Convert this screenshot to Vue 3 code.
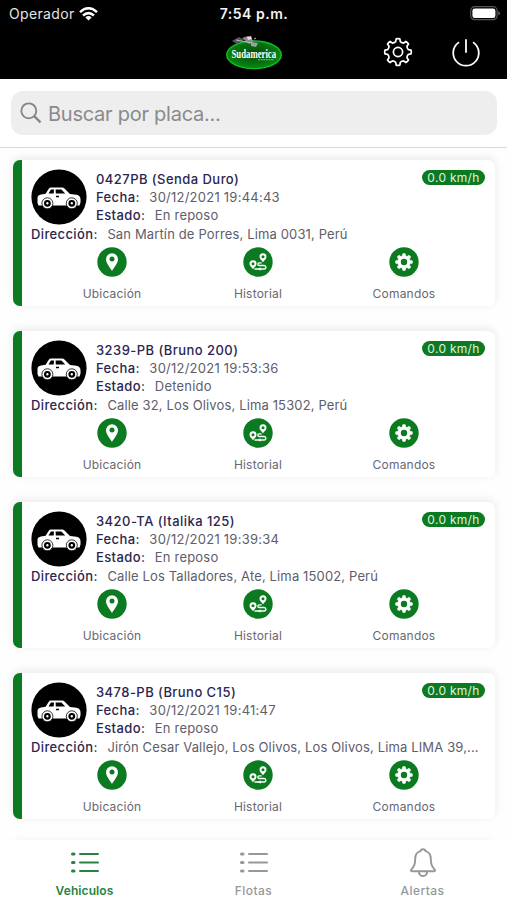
<script setup>
const vehicles = [
  { name: '0427PB (Senda Duro)', date: '30/12/2021 19:44:43', state: 'En reposo', address: 'San Martín de Porres, Lima 0031, Perú' },
  { name: '3239-PB (Bruno 200)', date: '30/12/2021 19:53:36', state: 'Detenido', address: 'Calle 32, Los Olivos, Lima 15302, Perú' },
  { name: '3420-TA (Italika 125)', date: '30/12/2021 19:39:34', state: 'En reposo', address: 'Calle Los Talladores, Ate, Lima 15002, Perú' },
  { name: '3478-PB (Bruno C15)', date: '30/12/2021 19:41:47', state: 'En reposo', address: 'Jirón Cesar Vallejo, Los Olivos, Los Olivos, Lima LIMA 39,...' },
]

// Outline of an eight-toothed cog centred on the origin
function cog(outer, inner, tip, root) {
  const at = (r, deg) => {
    const a = ((deg - 90) * Math.PI) / 180
    return `${(r * Math.cos(a)).toFixed(2)} ${(r * Math.sin(a)).toFixed(2)}`
  }
  let d = ''
  for (let i = 0; i < 8; i++) {
    const c = i * 45
    d += `${i ? 'L' : 'M'}${at(inner, c - root)}L${at(outer, c - tip)}Q${at(outer + 0.4, c)} ${at(outer, c + tip)}L${at(inner, c + root)}Q${at(inner - 0.9, c + 22.5)} ${at(inner, c + 45 - root)}`
  }
  return d + 'Z'
}
const outlineCog = cog(13.2, 10.6, 8, 12.5)
const solidCog = cog(8.3, 6.7, 9, 14)
</script>

<template>
  <div class="screen">
    <header class="top">
      <div class="status">
        <div class="carrier">
          <span>Operador</span>
          <svg width="19" height="14" viewBox="0 0 19 14" fill="none" stroke="#fff" stroke-width="2.5">
            <path d="M1 5.1Q9.5-2.5 18 5.1" /><path d="M4 8.5Q9.5 3.7 15 8.5" />
            <path d="M9.5 13.5L6.4 10.4Q9.5 7.8 12.6 10.4Z" fill="#fff" stroke="none" />
          </svg>
        </div>
        <b class="clock">7:54 p.m.</b>
        <svg class="battery" width="31" height="15" viewBox="0 0 31 15">
          <rect x=".7" y=".7" width="26.4" height="13" rx="4" fill="none" stroke="#57575a" stroke-width="1.2" />
          <rect x="2.4" y="2.4" width="23" height="9.6" rx="2.3" fill="#fff" />
          <path d="M28.3 5.2Q30 5.7 30 7.2Q30 8.7 28.3 9.2Z" fill="#66666a" />
        </svg>
      </div>
      <div class="brandbar">
        <svg class="logo" width="60" height="36" viewBox="0 0 60 36">
          <defs>
            <radialGradient id="leaf" cx=".5" cy=".45" r=".55">
              <stop offset="0" stop-color="#064a0b" /><stop offset=".7" stop-color="#077410" /><stop offset="1" stop-color="#069013" />
            </radialGradient>
          </defs>
          <ellipse cx="30" cy="19.8" rx="27.3" ry="13.8" fill="url(#leaf)" stroke="#12bd24" stroke-width="1.4" />
          <path d="M8 6L15 2L20 5L13 9Z" fill="#55565d" />
          <path d="M18 3L24 1L30 6L25 9Z" fill="#8b8a91" />
          <path d="M23 2L27 1L28 4L24 5Z" fill="#e3ded9" />
          <path d="M27 7L34 8L32 12L27 11Z" fill="#98a19b" />
          <path d="M30 4L32 3M12 5L28 8" stroke="#bcb9c3" stroke-width="1" />
          <text transform="translate(29.8 22.8) scale(.76 1)" text-anchor="middle" class="logotext">Sudamerica</text>
          <path d="M34 24.8H50" stroke="#8cb58e" stroke-width="1.1" stroke-dasharray="2 .6" />
        </svg>
        <svg class="gear" width="30" height="30" viewBox="-15 -15 30 30" fill="none" stroke="#fff" stroke-width="1.7" stroke-linejoin="round">
          <path :d="outlineCog" /><circle r="4.6" />
        </svg>
        <svg class="power" width="30" height="30" viewBox="-15 -15 30 30" fill="none" stroke="#fff" stroke-width="1.8" stroke-linecap="round">
          <path d="M-7.6-10.4A12.8 12.8 0 1 0 7.6-10.4M0-13V-1" />
        </svg>
      </div>
    </header>

    <div class="searchrow">
      <div class="search">
        <svg width="22" height="22" viewBox="0 0 22 22" fill="none" stroke="#858588" stroke-width="1.8">
          <circle cx="8.8" cy="8.8" r="7.5" /><path d="M14.2 14.2L20.5 20.3" stroke-width="2.3" />
        </svg>
        <span>Buscar por placa...</span>
      </div>
    </div>

    <main class="list">
      <article v-for="v in vehicles" :key="v.name" class="card">
        <div class="summary">
          <svg class="avatar" width="56" height="56" viewBox="0 0 56 56">
            <circle cx="28" cy="28" r="27.6" fill="#000" />
            <path d="M6.5 34V28.5Q6.8 26 10 25.4L14.6 24.8L17.8 19.7Q18.5 18.6 20 18.6H31Q32.6 18.6 34 20L39 25L45.5 25.8Q49.3 26.5 49.5 30V33.5L48.5 36.5H7.5Z" fill="#fff" />
            <path d="M17.5 24.4L19.9 20.6H23L22.7 24.4ZM24.6 20.6H30.4L34.2 24.4H24.8Z" fill="#000" />
            <path d="M25 27.5H28" stroke="#000" stroke-width="1.5" />
            <g fill="#fff" stroke="#000" stroke-width=".8">
              <circle cx="16.4" cy="34.3" r="5.5" /><circle cx="40.8" cy="34.3" r="5.5" />
            </g>
            <g fill="#fff" stroke="#000" stroke-width="2.2">
              <circle cx="16.4" cy="34.3" r="2.3" /><circle cx="40.8" cy="34.3" r="2.3" />
            </g>
          </svg>
          <div class="facts">
            <div class="line name">{{ v.name }}</div>
            <div class="line"><b>Fecha:</b><span class="date">{{ v.date }}</span></div>
            <div class="line"><b>Estado:</b><span>{{ v.state }}</span></div>
          </div>
          <span class="speed">0.0 km/h</span>
        </div>
        <div class="line address"><b>Dirección:</b><span>{{ v.address }}</span></div>
        <div class="actions">
          <div class="action">
            <svg width="30" height="30" viewBox="0 0 30 30">
              <circle cx="15" cy="15" r="14.7" fill="#0c7a20" />
              <path fill-rule="evenodd" d="M15 23.9C13 20.4 9 16.2 9 12.2A6 6 0 0 1 21 12.2C21 16.2 17 20.4 15 23.9ZM15 9.4A2.5 2.5 0 1 0 15 14.4A2.5 2.5 0 1 0 15 9.4Z" fill="#fff" />
            </svg>
            <span>Ubicación</span>
          </div>
          <div class="action">
            <svg width="30" height="30" viewBox="0 0 30 30">
              <circle cx="15" cy="15" r="14.7" fill="#0c7a20" />
              <path fill="#fff" fill-rule="evenodd" d="M20 15.2C18.5 13.2 16.5 11.6 16.5 9.7A3.5 3.5 0 0 1 23.5 9.7C23.5 11.6 21.5 13.2 20 15.2ZM20 8.2A1.5 1.5 0 1 0 20 11.2A1.5 1.5 0 1 0 20 8.2Z" />
              <path fill="#fff" fill-rule="evenodd" d="M10 22.2C8.5 20.2 6.5 18.6 6.5 16.7A3.5 3.5 0 0 1 13.5 16.7C13.5 18.6 11.5 20.2 10 22.2ZM10 15.2A1.5 1.5 0 1 0 10 18.2A1.5 1.5 0 1 0 10 15.2Z" />
              <path d="M18.6 15.9H16.3Q14.8 16 14.8 17.2Q14.8 18.4 16.5 18.5H21Q22.9 18.6 22.9 20.2Q22.9 22 21 22H11.5" fill="none" stroke="#fff" stroke-width="1.3" />
              <path d="M17.5 20.3L15 22L17.5 23.7Z" fill="#fff" />
            </svg>
            <span>Historial</span>
          </div>
          <div class="action">
            <svg width="30" height="30" viewBox="-15 -15 30 30">
              <circle r="14.7" fill="#0c7a20" />
              <path :d="solidCog" fill="#fff" stroke="#fff" stroke-width=".6" stroke-linejoin="round" /><circle r="3.2" fill="#0c7a20" />
            </svg>
            <span>Comandos</span>
          </div>
        </div>
      </article>
      <div class="card next"></div>
    </main>

    <nav class="tabs">
      <div class="tab active">
        <svg width="30" height="28" viewBox="0 0 30 28" fill="none" stroke="currentColor" stroke-width="2" stroke-linecap="round">
          <path d="M10 5H28M10 13.5H28M10 22H28" />
          <path d="M2.5 5H4M2.5 13.5H4M2.5 22H4" stroke-width="3" />
        </svg>
        <span>Vehiculos</span>
      </div>
      <div class="tab">
        <svg width="30" height="28" viewBox="0 0 30 28" fill="none" stroke="currentColor" stroke-width="2" stroke-linecap="round">
          <path d="M10 5H28M10 13.5H28M10 22H28" />
          <path d="M2.5 5H4M2.5 13.5H4M2.5 22H4" stroke-width="3" />
        </svg>
        <span>Flotas</span>
      </div>
      <div class="tab">
        <svg width="30" height="30" viewBox="0 0 30 30" fill="none" stroke="currentColor" stroke-width="1.9" stroke-linejoin="round">
          <path d="M15 1.2C13.2 1.2 12.6 2.3 12.4 3.2C8.6 4.2 7.2 7.3 7.2 11C7.2 17 5.8 18.7 3.3 21.6Q2.4 23 3.8 23.2H26.2Q27.6 23 26.7 21.6C24.2 18.7 22.8 17 22.8 11C22.8 7.3 21.4 4.2 17.6 3.2C17.4 2.3 16.8 1.2 15 1.2Z" />
          <path d="M10.8 23.5C11 26.6 12.6 28 15 28S19 26.6 19.2 23.5" />
        </svg>
        <span>Alertas</span>
      </div>
    </nav>
  </div>
</template>

<style>
body { margin: 0; background: #fff; }
</style>

<style scoped>
.screen { width: 507px; height: 900px; display: flex; flex-direction: column; overflow: hidden; background: #fefefe; font-family: Inter, "Liberation Sans", sans-serif; }
svg { display: block; flex: none; }
.top { height: 79px; flex: none; background: #000; color: #fff; }
.status { height: 27px; display: grid; grid-template-columns: 1fr auto 1fr; align-items: center; padding: 0 6px 0 9px; box-sizing: border-box; }
.carrier { display: flex; align-items: center; gap: 4.5px; font-size: 14px; color: #e4e4e4; letter-spacing: .35px; }
.clock { font-size: 14px; font-weight: 600; letter-spacing: .5px; color: #f3f3f3; margin-right: 2px; }
.battery { justify-self: end; }
.brandbar { height: 52px; display: grid; grid-template-columns: 224px 60px 98px 69px 56px; align-items: start; }
.logo { grid-column: 2; margin-top: 8px; overflow: visible; }
.logotext { font: bold 11.5px "Liberation Serif", serif; fill: #fff; }
.gear { grid-column: 4; margin-top: 10px; margin-left: .7px; }
.power { grid-column: 5; margin-top: 11px; margin-left: .3px; }
.searchrow { height: 69px; flex: none; box-sizing: border-box; padding: 12px 10px 12px 11px; border-bottom: 1px solid #d9d9db; background: #fff; }
.search { height: 44px; border-radius: 12px; background: #eee; display: flex; align-items: center; gap: 6px; padding-left: 9px; font-size: 20px; color: #8a8a8d; letter-spacing: -.25px; }
.search span { margin-top: 1px; }
.list { flex: 1; min-height: 0; overflow: hidden; padding: 12px 12px 0 13px; display: flex; flex-direction: column; gap: 25px; }
.card { height: 146px; flex: none; box-sizing: border-box; border-left: 9px solid #0c7a20; border-radius: 7px; background: #fff; box-shadow: 0 -2px 10px rgba(0, 0, 0, .09); padding: 9px 10px 0 9px; }
.card.next { border-left-color: #fff; }
.summary { display: flex; height: 65px; }
.facts { margin-left: 9px; padding-top: .5px; flex: 1; }
.line { height: 18.3px; line-height: 18.3px; font-size: 13px; color: #5e5d6b; white-space: nowrap; letter-spacing: .2px; }
.line b, .line.name { font-weight: 500; color: #2b2650; }
.line.name { letter-spacing: .45px; }
.line b { margin-right: 9.6px; letter-spacing: .38px; }
.line .date { letter-spacing: .24px; }
.speed { width: 63px; height: 15px; border-radius: 8px; background: #0c7a20; color: #e2f2e4; font-size: 12px; line-height: 15px; text-align: center; letter-spacing: .3px; margin-top: .5px; }
.line.address { height: 13px; margin-top: -9px; padding-bottom: 9.4px; letter-spacing: .14px; }
.actions { display: grid; grid-template-columns: repeat(3, 1fr); padding: 0 8px; }
.action { display: flex; flex-direction: column; align-items: center; font-size: 12px; color: #686773; letter-spacing: .2px; }
.action span { line-height: 16px; margin-top: 8.2px; }
.tabs { height: 60px; flex: none; display: grid; grid-template-columns: repeat(3, 1fr); background: #fff; }
.tab { display: flex; flex-direction: column; align-items: center; padding-top: 8px; color: #97979a; font-size: 12px; font-weight: 500; letter-spacing: .42px; }
.tab svg { height: 30px; }
.tab span { line-height: 16px; margin-top: 5px; }
.active { color: #258442; font-weight: 600; letter-spacing: .1px; }
</style>
